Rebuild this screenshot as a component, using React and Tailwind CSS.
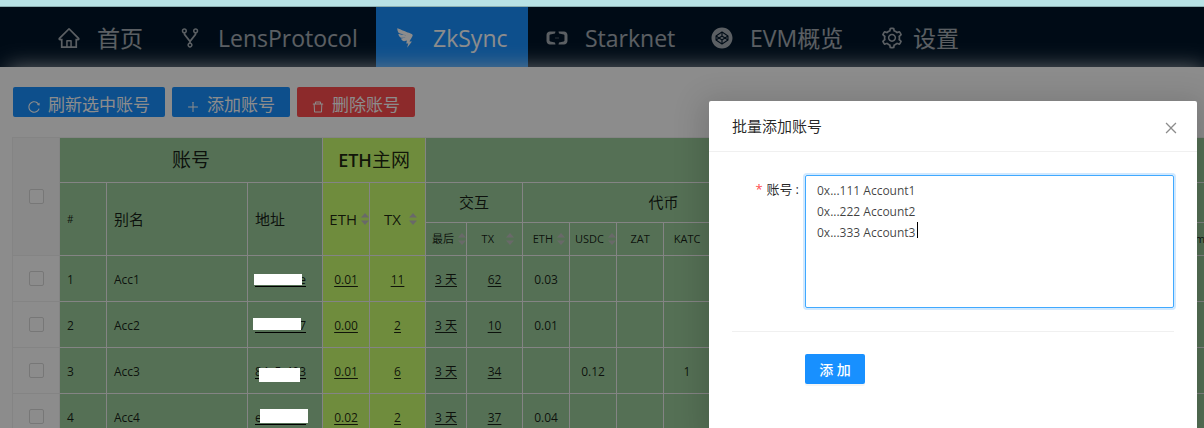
import {
  AiOutlineHome,
  AiOutlineFork,
  AiOutlineDingding,
  AiOutlineAliyun,
  AiFillCodepenCircle,
  AiOutlineSetting,
  AiOutlineReload,
  AiOutlinePlus,
  AiOutlineDelete,
  AiOutlineClose,
} from "react-icons/ai";

const NAV = [
  { label: "首页", Icon: AiOutlineHome, size: "w-[121px]" },
  { label: "LensProtocol", Icon: AiOutlineFork, size: "w-[215px]" },
  { label: "ZkSync", Icon: AiOutlineDingding, size: "w-[152px]", active: true },
  { label: "Starknet", Icon: AiOutlineAliyun, size: "w-[165px]" },
  { label: "EVM概览", Icon: AiFillCodepenCircle, size: "w-[170px]" },
  { label: "设置", Icon: AiOutlineSetting, size: "w-[116px]", tight: true },
];

const ROWS = [
  { id: 1, alias: "Acc1", head: "", tail: "e", cover: "left-[6px] top-[18px] h-[11px] w-12", eth: "0.01", tx: "11", last: "3 天", zk: "62", tokens: ["0.03", "", "", ""] },
  { id: 2, alias: "Acc2", head: "", tail: "7", cover: "left-[5px] top-4 h-3 w-12", eth: "0.00", tx: "2", last: "3 天", zk: "10", tokens: ["0.01", "", "", ""] },
  { id: 3, alias: "Acc3", head: "84c5", tail: "403", cover: "left-[11px] top-5 h-[14px] w-[41px]", eth: "0.01", tx: "6", last: "3 天", zk: "34", tokens: ["", "0.12", "", "1"] },
  { id: 4, alias: "Acc4", head: "e", tail: "", cover: "left-3 top-[15px] h-[14px] w-12", eth: "0.02", tx: "2", last: "3 天", zk: "37", tokens: ["0.04", "", "", ""] },
];

const COLS = ["w-[47px]", "w-[47px]", "w-[141px]", "w-[75px]", "w-[47px]", "w-[56px]", "w-[41px]", "w-[56px]", "w-[47px]", "w-[47px]", "w-[47px]", "w-[47px]", "w-[47px]", "w-[47px]", "w-[388px]", "w-[80px]"];

const GREEN = "border border-[#f0f0f0] bg-[#9bcd9b] ";
const LIME = "border border-[#f0f0f0] bg-[#caff70] ";
const PLAIN = "border border-[#f0f0f0] ";

function Sorter() {
  return (
    <svg viewBox="0 0 8 12" className="h-3 w-2 shrink-0 fill-[#bfbfbf]" aria-hidden="true">
      <path d="M4 0 8 4.5H0Z M0 7.5H8L4 12Z" />
    </svg>
  );
}

function Sortable({ children, gap = "gap-1" }) {
  return (
    <span className={"flex items-center justify-end " + gap}>
      {children}
      <Sorter />
    </span>
  );
}

function Tick({ label }) {
  return (
    <input
      type="checkbox"
      aria-label={label}
      className="mx-auto block size-[15px] appearance-none rounded-[2px] border border-[#d9d9d9] bg-white"
    />
  );
}

function Num({ children }) {
  return (
    <a href="#tx" className="underline underline-offset-2">
      {children}
    </a>
  );
}

function ActionButton({ Icon, color, size, children }) {
  return (
    <button type="button" className={"flex h-[30px] items-center gap-[7px] rounded-[2px] pt-[6px] pl-[14px] text-[17px] leading-6 text-white " + color + " " + size}>
      <Icon className="mt-[3px] size-[14px]" />
      {children}
    </button>
  );
}

function AccountsTable() {
  return (
    <table className="w-[1260px] table-fixed border-collapse text-[12px] text-black/85">
      <colgroup>
        {COLS.map((c, i) => (
          <col key={i} className={c} />
        ))}
      </colgroup>
      <thead>
        <tr className="h-[45px] text-[19px]">
          <th rowSpan={3} className={PLAIN + "bg-[#fafafa]"}>
            <Tick label="全选" />
          </th>
          <th colSpan={3} className={GREEN + "font-normal"}>账号</th>
          <th colSpan={2} className={LIME + "font-normal"}>
            <span className="text-[18px] font-semibold">ETH</span>主网
          </th>
          <th colSpan={10} className={GREEN} />
        </tr>
        <tr className="h-10 text-[15px]">
          <th rowSpan={2} className={GREEN + "px-[7px] text-left text-[10px] font-normal"}>#</th>
          <th rowSpan={2} className={GREEN + "px-[7px] text-left font-normal"}>别名</th>
          <th rowSpan={2} className={GREEN + "px-[7px] text-left font-normal"}>地址</th>
          <th rowSpan={2} className={LIME + "text-[15px] font-medium"}>
            <Sortable>ETH</Sortable>
          </th>
          <th rowSpan={2} className={LIME + "pr-2 text-[15px] font-medium"}>
            <Sortable gap="gap-2">TX</Sortable>
          </th>
          <th colSpan={2} className={GREEN + "font-normal"}>交互</th>
          <th colSpan={6} className={GREEN + "font-normal"}>代币</th>
          <th colSpan={2} className={GREEN} />
        </tr>
        <tr className="h-[33px] text-[11px]">
          <th className={GREEN + "font-normal"}>
            <Sortable>最后</Sortable>
          </th>
          <th className={GREEN + "pr-2 font-medium"}>
            <Sortable gap="gap-3">TX</Sortable>
          </th>
          <th className={GREEN + "pr-1 font-medium"}>
            <Sortable>ETH</Sortable>
          </th>
          <th className={GREEN + "font-medium"}>
            <Sortable>USDC</Sortable>
          </th>
          <th className={GREEN + "font-medium"}>ZAT</th>
          <th className={GREEN + "font-medium"}>KATC</th>
          <th className={GREEN} />
          <th className={GREEN} />
          <th className={GREEN} />
          <th className={GREEN + "pl-[2px] text-left font-medium"}>m</th>
        </tr>
      </thead>
      <tbody>
        {ROWS.map((r) => (
          <tr key={r.id} className="h-[46px] text-center">
            <td className={PLAIN}>
              <Tick label={r.alias} />
            </td>
            <td className={GREEN + "px-[7px] pt-0.5 text-left"}>{r.id}</td>
            <td className={GREEN + "px-[7px] pt-0.5 text-left"}>{r.alias}</td>
            <td className={GREEN + "relative px-[7px] pt-0.5"}>
              <a href="#address" className="flex h-[15px] w-[51px] justify-between border-b border-black leading-[15px]">
                <span>{r.head}</span>
                <span>{r.tail}</span>
              </a>
              <span className={"absolute z-20 bg-white " + r.cover} />
            </td>
            <td className={LIME + "pt-0.5"}><Num>{r.eth}</Num></td>
            <td className={LIME + "pt-0.5"}><Num>{r.tx}</Num></td>
            <td className={GREEN + "pt-0.5"}><Num>{r.last}</Num></td>
            <td className={GREEN + "pt-0.5"}><Num>{r.zk}</Num></td>
            {r.tokens.map((t, i) => (
              <td key={i} className={GREEN + "pt-0.5"}>{t}</td>
            ))}
            <td className={GREEN} />
            <td className={GREEN} />
            <td className={GREEN} />
            <td className={GREEN} />
          </tr>
        ))}
      </tbody>
    </table>
  );
}

function AddDialog() {
  return (
    <div
      role="dialog"
      aria-labelledby="dialog-title"
      className="absolute top-[101px] right-[7px] bottom-0 z-30 w-[488px] rounded-t-[2px] bg-white text-black/85 shadow-[0_6px_30px_8px_rgba(0,0,0,0.14)]"
    >
      <header className="flex h-[51px] items-center justify-between border-b border-[#f0f0f0] pr-[18px] pl-[23px]">
        <h2 id="dialog-title" className="text-[15px] leading-[22px]">批量添加账号</h2>
        <button type="button" aria-label="关闭" className="pt-1 text-black/45">
          <AiOutlineClose className="size-4" />
        </button>
      </header>
      <form className="px-[23px] pt-[23px]">
        <div className="flex">
          <label htmlFor="accounts" className="flex w-[73px] shrink-0 items-start justify-end pt-[3px] pr-[6px] text-[13px] leading-[22px]">
            <span className="mr-1 text-[#ff4d4f]">*</span>
            账号
            <span className="ml-[3px]">:</span>
          </label>
          <div className="relative flex-1">
            <textarea
              id="accounts"
              defaultValue={"0x...111 Account1\n0x...222 Account2\n0x...333 Account3"}
              className="block h-[133px] w-full resize-none rounded-[2px] border border-[#40a9ff] px-[11px] pt-1 text-[12px] leading-[21px] text-black/75 shadow-[0_0_0_2px_rgba(24,144,255,0.2)] outline-none"
            />
            <span className="absolute top-[47px] left-28 h-4 w-px bg-black" />
          </div>
        </div>
        <hr className="mt-[23px] border-[#f0f0f0]" />
        <button type="submit" className="mt-[22px] ml-[73px] h-[30px] w-[60px] rounded-[2px] bg-[#1890ff] text-[14px] font-medium text-white shadow-[0_2px_0_rgba(0,0,0,0.04)]">
          添 加
        </button>
      </form>
    </div>
  );
}

export default function App() {
  return (
    <div className="relative flex h-screen flex-col overflow-hidden bg-white font-['Open_Sans','Noto_Sans_CJK_SC',sans-serif]">
      <div className="h-[7px] shrink-0 border-b border-[#8cb0b2] bg-[#b8e2e5]" />
      <nav className="flex h-[60px] shrink-0 bg-[#001529] pl-10">
        {NAV.map(({ label, Icon, size, active, tight }) => (
          <a
            key={label}
            href="#nav"
            className={
              "flex shrink-0 items-center px-[17px] pt-0.5 text-[23px] whitespace-nowrap " +
              size +
              (tight ? " gap-[9px]" : " gap-4") +
              (active ? " bg-[#1890ff] text-white" : " text-white/65")
            }
          >
            <Icon className="size-6 shrink-0" />
            {label}
          </a>
        ))}
      </nav>
      <main className="relative ml-2 flex-1 bg-white pl-1 shadow-[0_0_20px_rgba(255,255,255,0.7)]">
        <div className="flex gap-[7px] pt-5 pl-px">
          <ActionButton Icon={AiOutlineReload} color="bg-[#1890ff]" size="w-[152px]">刷新选中账号</ActionButton>
          <ActionButton Icon={AiOutlinePlus} color="bg-[#1890ff]" size="w-[118px]">添加账号</ActionButton>
          <ActionButton Icon={AiOutlineDelete} color="bg-[#ff4d4f]" size="w-[118px]">删除账号</ActionButton>
        </div>
        <div className="mt-5">
          <AccountsTable />
        </div>
      </main>
      <div className="absolute inset-x-0 top-[7px] bottom-0 z-10 bg-black/45" />
      <AddDialog />
    </div>
  );
}
